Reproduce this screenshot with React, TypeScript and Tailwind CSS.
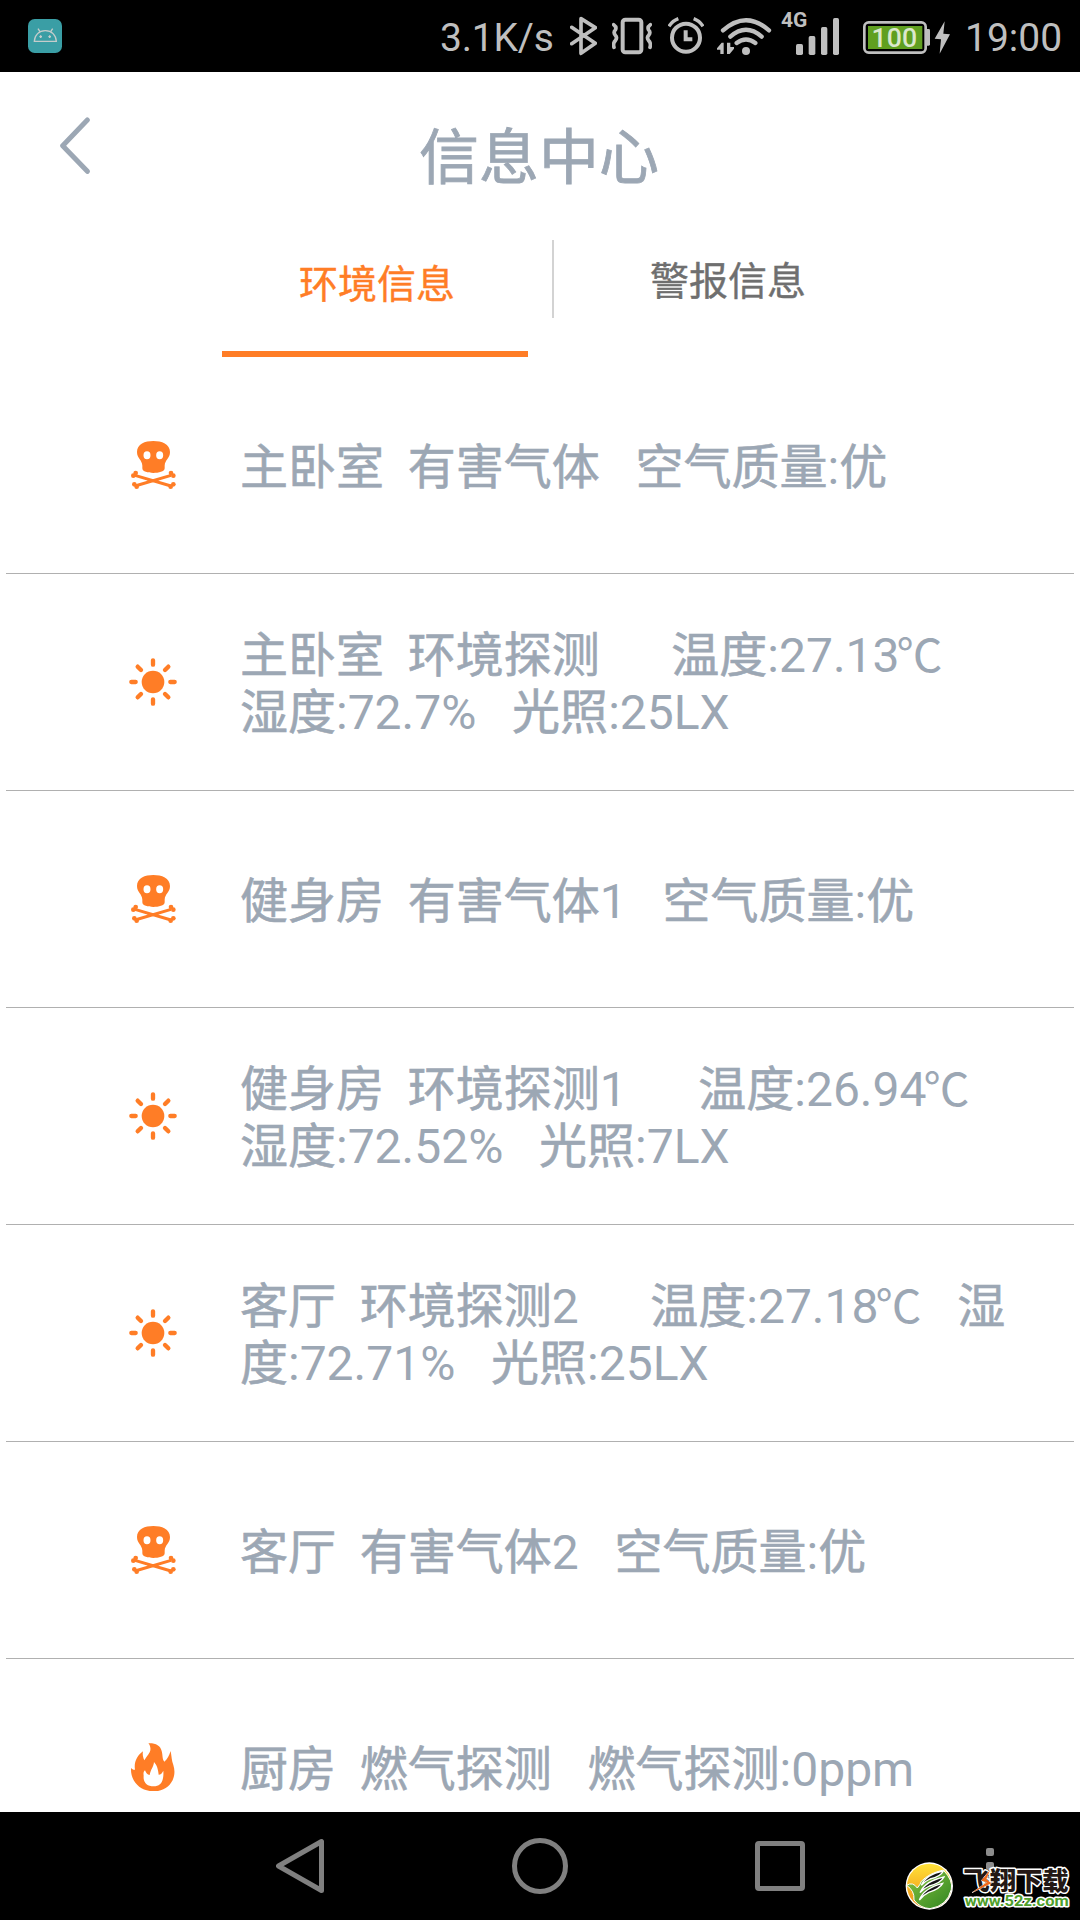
import React from 'react';

type IconName = 'gas' | 'sun' | 'fire';

interface InfoItem {
  id: number;
  icon: IconName;
  lines: string[];
}

const items: InfoItem[] = [
  { id: 1, icon: 'gas', lines: ['主卧室  有害气体   空气质量:优'] },
  { id: 2, icon: 'sun', lines: ['主卧室  环境探测      温度:27.13℃', '湿度:72.7%   光照:25LX'] },
  { id: 3, icon: 'gas', lines: ['健身房  有害气体1   空气质量:优'] },
  { id: 4, icon: 'sun', lines: ['健身房  环境探测1      温度:26.94℃', '湿度:72.52%   光照:7LX'] },
  { id: 5, icon: 'sun', lines: ['客厅  环境探测2      温度:27.18℃   湿', '度:72.71%   光照:25LX'] },
  { id: 6, icon: 'gas', lines: ['客厅  有害气体2   空气质量:优'] },
  { id: 7, icon: 'fire', lines: ['厨房  燃气探测   燃气探测:0ppm'] },
];

const GasIcon = () => (
  <svg className="h-12 w-12" viewBox="0 0 144 144" fill="#ff7d26">
    <path
      fillRule="evenodd"
      d="M73 0C98 0 123 9 123 33C123 52 108 56 107 74V82C107 92 89 96 73 96C57 96 40 92 40 82V74C39 56 24 52 24 33C24 9 48 0 73 0ZM54 31A10.500 12 0 1 0 54 55A10.500 12 0 1 0 54 31ZM92 31A10.500 12 0 1 0 92 55A10.500 12 0 1 0 92 31Z"
    />
    <path d="M18 103L126 135M126 103L18 135" stroke="#ff7d26" strokeWidth="9" />
    <circle cx="20" cy="96" r="7" />
    <circle cx="13" cy="104" r="7" />
    <circle cx="126" cy="96" r="7" />
    <circle cx="133" cy="104" r="7" />
    <circle cx="16" cy="130" r="7" />
    <circle cx="23" cy="137" r="7" />
    <circle cx="133" cy="130" r="7" />
    <circle cx="125" cy="137" r="7" />
  </svg>
);

const SunIcon = () => (
  <svg className="h-12 w-12" viewBox="0 0 144 144" stroke="#ff7d26" strokeWidth="13" strokeLinecap="round">
    <circle cx="72" cy="72" r="34" fill="#ff7d26" stroke="none" />
    <path d="M72 7V20M72 124V137M7 72H20M124 72H137M26 26L36 36M108 108L118 118M118 26L108 36M36 108L26 118" />
  </svg>
);

const FireIcon = () => (
  <svg className="h-12 w-12" viewBox="-4 0 144 144" fill="#ff7d26">
    <path
      fillRule="evenodd"
      d="M54 1C76 0 90 8 94 24C98 38 95 47 102 56C112 48 116 38 121 24C124 41 124 53 129 66C142 105 116 145 71 145C30 145 0 116 2 75C6 79 10 81 14 80C10 58 20 38 38 25C36 34 38 43 42 52C49 39 63 28 60 14C59 8 57 4 54 1ZM71 57C70 72 61 78 58 96C51 95 47 90 44 82C39 86 39 91 40 98C38 119 50 130 70 130C91 130 101 116 99 83C96 90 91 95 85 95C83 80 81 68 71 57Z"
    />
  </svg>
);

const ItemIcon: React.FC<{ name: IconName }> = ({ name }) => {
  switch (name) {
    case 'gas':
      return <GasIcon />;
    case 'sun':
      return <SunIcon />;
    default:
      return <FireIcon />;
  }
};

const StatusBar = () => (
  <div className="flex h-[72px] shrink-0 items-center bg-black pl-7 text-[#bfbfbf]">
    <svg className="size-[34px]" viewBox="0 0 102 102" fill="none" stroke="#c5cccb" strokeWidth="4">
      <rect width="102" height="102" rx="20" fill="#3a9ea5" stroke="none" />
      <path d="M19 67C20 48 33 35 52 35S84 48 85 67Z" />
      <path d="M30 29L36 38M74 29L68 38M34 53H42M38 49V57M61 53H69M65 49V57" />
    </svg>

    <span className="ml-[378px] w-[130px] pt-1 text-[39px] leading-[72px] tracking-[-0.2px]">3.1K/s</span>

    {/* Bluetooth */}
    <svg className="h-[72px] w-[27px]" viewBox="450 0 81 216" fill="none" stroke="currentColor" strokeWidth="11" strokeLinejoin="round" strokeLinecap="round">
      <path d="M455 82L526 130L483 160V56L526 83L455 131" />
    </svg>

    {/* Vibrate */}
    <svg className="ml-[15px] h-[72px] w-10" viewBox="576 0 120 216" fill="none" stroke="currentColor" strokeWidth="11" strokeLinecap="round">
      <rect x="608" y="59" width="56" height="98" rx="8" strokeWidth="12" />
      <path d="M581 74Q591 81 586 90Q579 97 586 106Q593 113 586 122Q578 130 582 142" />
      <path d="M691 74Q681 81 686 90Q693 97 686 106Q679 113 686 122Q694 130 690 142" />
    </svg>

    {/* Alarm */}
    <svg className="ml-4 h-[72px] w-9" viewBox="744 0 108 216" fill="none" stroke="currentColor" strokeWidth="12">
      <circle cx="798" cy="113" r="42" />
      <path d="M797 91V118H817" />
      <path d="M747 79Q757 63 775 56M821 56Q839 63 849 79" strokeWidth="10" />
    </svg>

    {/* Wi-Fi */}
    <svg className="ml-[13px] h-[72px] w-[55px]" viewBox="891 0 165 216" fill="none" stroke="currentColor" strokeWidth="13" strokeLinecap="round">
      <path d="M909 91Q978 30 1047 91M931 110Q978 69 1025 110M950 129Q978 108 1006 129" />
      <circle cx="978" cy="153" r="12" fill="currentColor" stroke="none" />
      <path d="M911 128V162H901V149H891V145L905 128ZM921 128H931V141H942V146L929 162H921Z" fill="currentColor" stroke="none" />
    </svg>

    {/* Cell signal */}
    <div className="relative ml-6 h-[72px] w-[43px]">
      <span className="absolute -left-[15px] top-2 text-[21px] font-bold leading-6">4G</span>
      <svg className="h-[72px] w-[43px]" viewBox="168 0 129 216" fill="currentColor">
        <rect x="168" y="132" width="21" height="33" rx="5" />
        <rect x="206" y="108" width="20" height="57" rx="5" />
        <rect x="243" y="81" width="19" height="84" rx="5" />
        <rect x="279" y="54" width="18" height="111" rx="5" />
      </svg>
    </div>

    {/* Battery */}
    <svg className="ml-6 h-[72px] w-[87px]" viewBox="369 0 261 216" fill="currentColor">
      <rect x="373" y="67" width="184" height="91" rx="13" fill="none" stroke="currentColor" strokeWidth="8" />
      <path d="M558 87H566Q570 87 570 91V133Q570 137 566 137H558Z" />
      <rect x="384" y="78" width="163" height="69" fill="#609f20" />
      <text x="463" y="141" textAnchor="middle" fontSize="80" fontWeight="500" fill="#dbe8cc">100</text>
      <path d="M614 64L584 116L603 118L599 161L630 103L610 101Z" />
    </svg>

    <span className="ml-[15px] pt-1 text-[39px] leading-[72px]">19:00</span>
  </div>
);

const Header = () => (
  <div className="flex h-[150px] shrink-0 items-center pl-[60px] text-[#9ca7b4]">
    <svg className="mt-[-4px] h-[57px] w-[30px]" viewBox="0 0 90 171" fill="none" stroke="currentColor" strokeWidth="15" strokeLinecap="round" strokeLinejoin="round">
      <path d="M82 9L8 86L82 163" />
    </svg>
    <h1 className="ml-[329px] mt-[23px] text-[60px] leading-[72px] [-webkit-text-stroke:0.8px]">信息中心</h1>
  </div>
);

const Tabs = () => (
  <div className="flex h-[135px] shrink-0 pl-[222px] [-webkit-text-stroke:0.4px]">
    <button className="h-full w-[306px] border-b-[6px] border-[#ff7d26] pb-[3px] pl-1 text-[39px] text-[#ff7d26]">
      环境信息
    </button>
    <div className="ml-6 mt-[18px] h-[78px] w-[2px] bg-[#d3d3d3]" />
    <button className="ml-5 h-full w-[308px] pb-[15px] text-[39px] text-[#6f6f6f]">警报信息</button>
  </div>
);

// Chinese glyphs get a slightly heavier stroke than the digits beside them
const renderText = (line: string) =>
  line.split(/([\u4e00-\u9fff]+|℃)/).map((part, index) => {
    if (part === '℃') {
      return (
        <span key={index} className="-ml-[3px] text-[46px] leading-none">
          {part}
        </span>
      );
    }
    return index % 2 === 1 ? (
      <span key={index} className="[-webkit-text-stroke:0.6px]">
        {part}
      </span>
    ) : (
      part
    );
  });

const InfoRow: React.FC<{ item: InfoItem }> = ({ item }) => (
  <li className="flex h-[217px] shrink-0 items-center border-b border-[#b0b0b0] pl-[123px]">
    <ItemIcon name={item.icon} />
    <div className="ml-[63px] mt-1 text-[48px] leading-[57px] text-[#9ca7b4]">
      {item.lines.map(line => (
        <p key={line} className="h-[57px] whitespace-pre">
          {renderText(line)}
        </p>
      ))}
    </div>
  </li>
);

const Watermark = () => (
  <svg className="absolute bottom-0 right-0 h-[100px] w-[200px]" viewBox="0 0 600 300">
    <defs>
      <linearGradient id="leafYellow" x1="0" y1="0" x2="0" y2="1">
        <stop offset="0" stopColor="#ffe23a" />
        <stop offset="1" stopColor="#f08c10" />
      </linearGradient>
      <linearGradient id="leafGreen" x1="0" y1="0" x2="1" y2="1">
        <stop offset="0" stopColor="#8cc63f" />
        <stop offset="1" stopColor="#2f8422" />
      </linearGradient>
    </defs>
    <circle cx="148" cy="198" r="71" fill="#fff" />
    <circle cx="148" cy="198" r="67" fill="url(#leafYellow)" />
    <path d="M80 196Q98 184 112 204Q122 192 124 184Q146 160 190 150Q220 182 214 208Q202 258 150 266Q120 264 102 240Q104 212 80 196Z" fill="url(#leafGreen)" stroke="#fff" strokeWidth="3" />
    <g fill="#151515" stroke="#fff" strokeWidth="4">
      <path d="M124 196Q138 163 190 153Q182 170 150 177Q134 184 124 196Z" />
      <path d="M120 218Q136 183 192 171Q184 188 148 198Q130 206 120 218Z" />
      <path d="M118 240Q132 204 188 190Q180 206 146 217Q128 226 118 240Z" />
    </g>
    <g strokeLinejoin="round" className="[paint-order:stroke]">
      <text x="250" y="211" fontSize="76" fontWeight="900" textLength="316" lengthAdjust="spacingAndGlyphs" fill="#231815" stroke="#fff" strokeWidth="9">飞翔下载</text>
      <path d="M330 150L304 182L322 186L276 218L334 190L319 178Z" fill="#f26a1b" stroke="#fff" strokeWidth="2" />
      <text x="254" y="257" fontSize="46" fontWeight="700" textLength="312" lengthAdjust="spacingAndGlyphs" fill="#4f9f2b" stroke="#fff" strokeWidth="9">www.52z.com</text>
    </g>
  </svg>
);

const NavBar = () => (
  <div className="relative flex h-[108px] shrink-0 items-center bg-black pl-[276px] text-[#808080]">
    <svg className="h-14 w-12" viewBox="0 0 48 56" fill="none" stroke="currentColor" strokeWidth="5" strokeLinejoin="round">
      <path d="M45.500 3.500V52.500L2.500 28Z" />
    </svg>
    <div className="ml-[188px] size-14 rounded-full border-[5px] border-[#808080]" />
    <div className="ml-[187px] size-[50px] rounded-[4px] border-[5px] border-[#808080]" />
    <div className="ml-[181px] flex flex-col gap-[6px]">
      <span className="size-2 rounded-[2px] bg-[#8c8c8c]" />
      <span className="size-2 rounded-[2px] bg-[#8c8c8c]" />
      <span className="size-2 rounded-[2px] bg-[#8c8c8c]" />
    </div>
    <Watermark />
  </div>
);

const App: React.FC = () => (
  <div className="flex h-[1920px] w-[1080px] flex-col overflow-hidden bg-white font-[Roboto,'Noto_Sans_CJK_SC',sans-serif]">
    <StatusBar />
    <Header />
    <Tabs />
    <ul className="flex min-h-0 flex-1 flex-col overflow-hidden px-[6px]">
      {items.map(item => (
        <InfoRow key={item.id} item={item} />
      ))}
    </ul>
    <NavBar />
  </div>
);

export default App;
